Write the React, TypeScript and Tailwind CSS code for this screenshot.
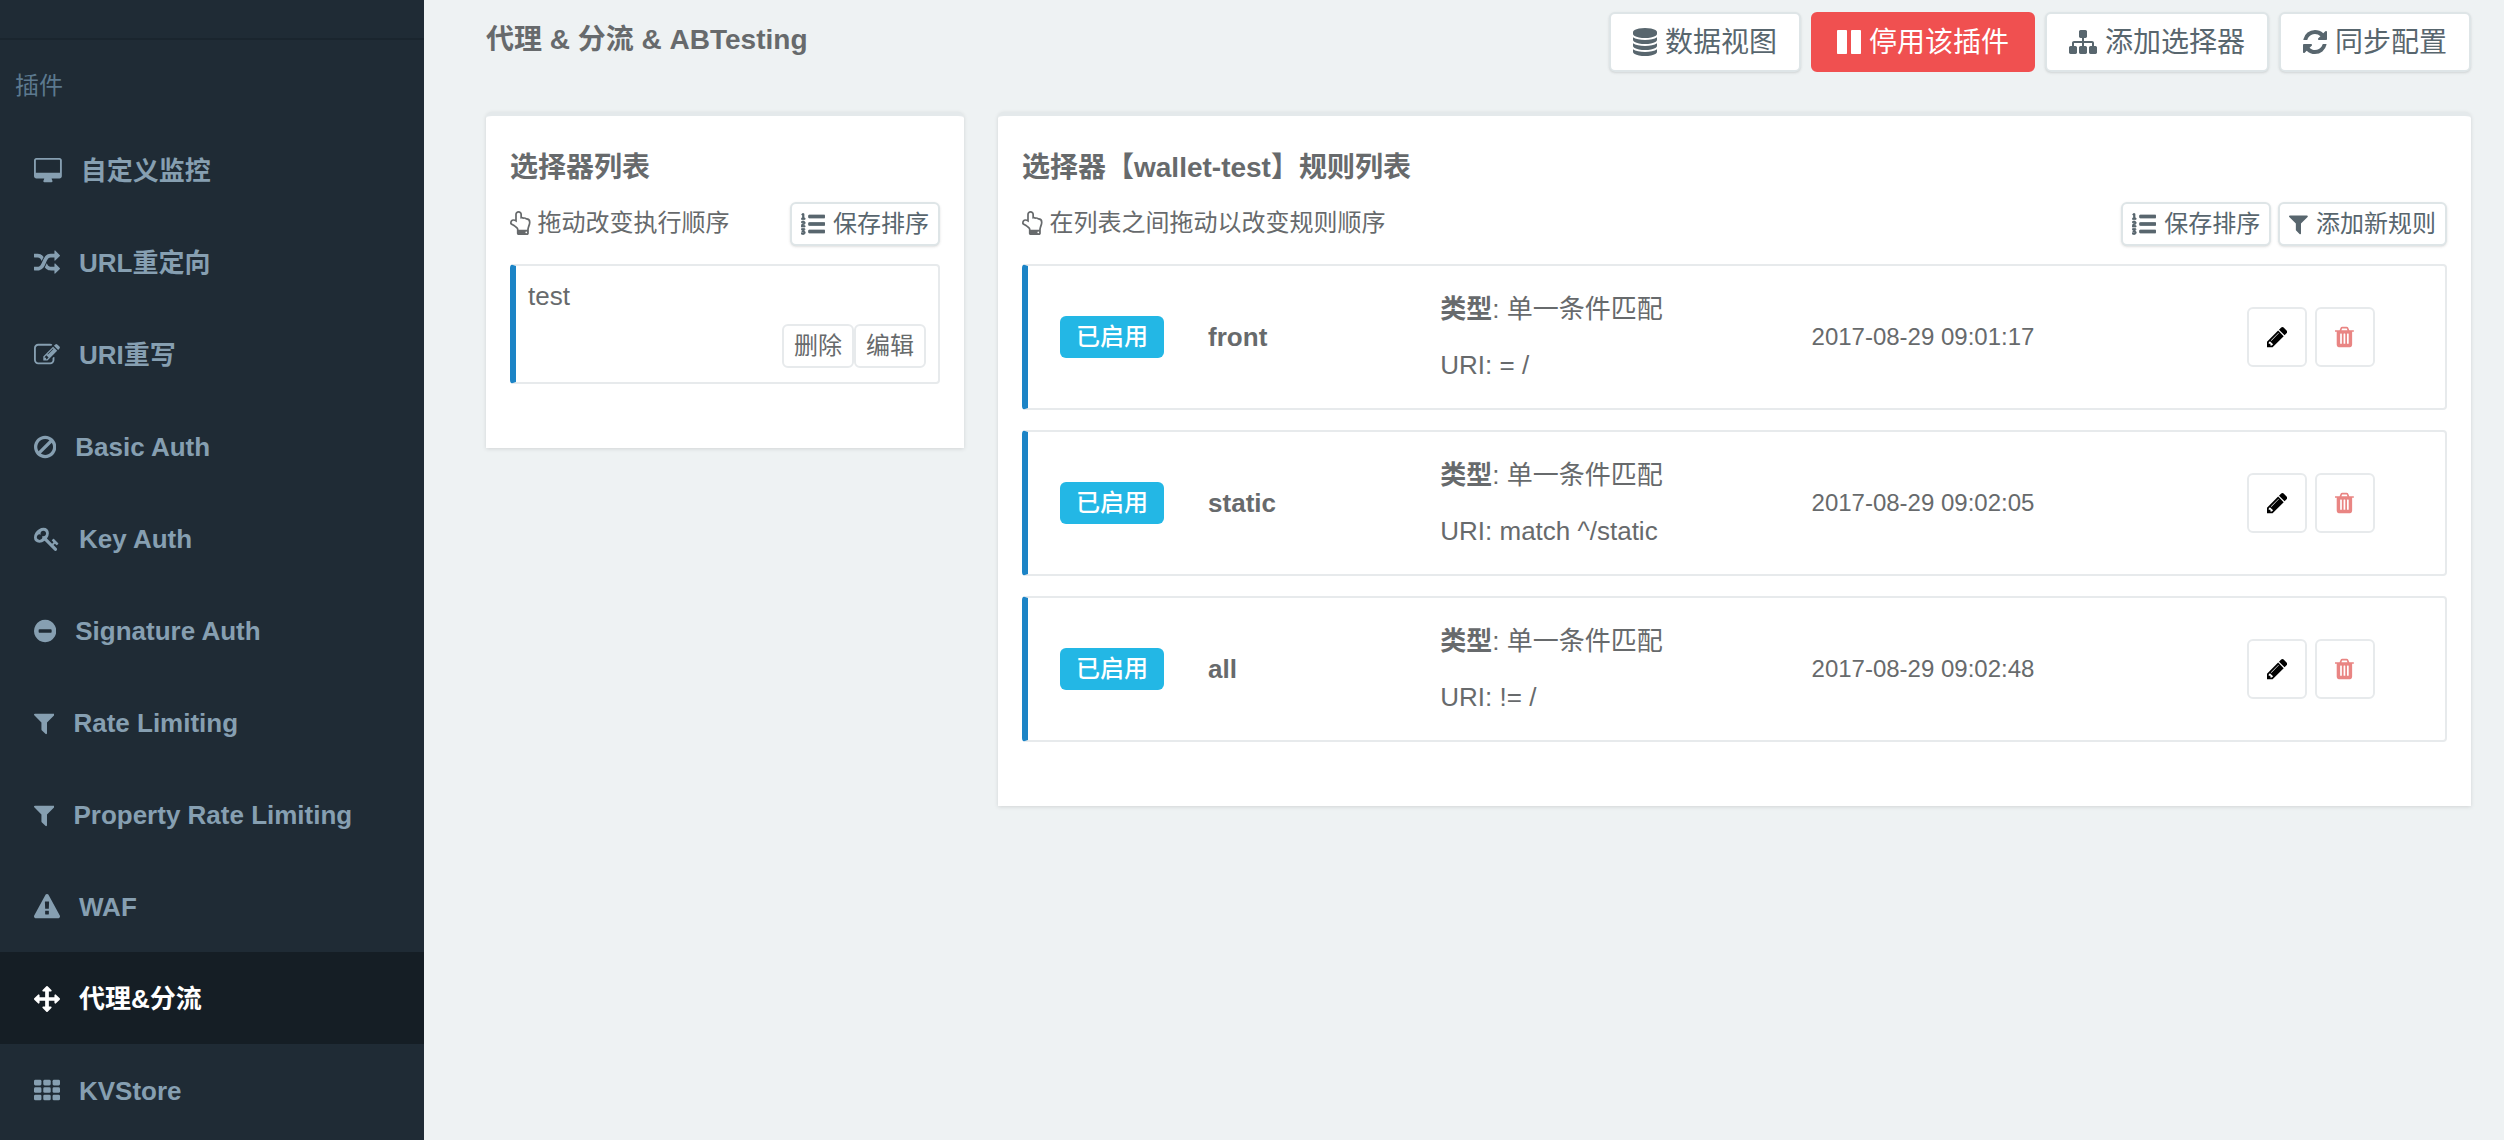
import React from 'react';
import { FaListOl } from 'react-icons/fa';
import clsx from 'clsx';

type IconProps = { className?: string };

const svg = (viewBox: string, d: string) =>
  function Icon({ className }: IconProps) {
    return (
      <svg viewBox={viewBox} fill="currentColor" aria-hidden="true" className={clsx('w-auto shrink-0', className)}>
        <path d={d} />
      </svg>
    );
  };

const Desktop = svg('-64 0 1920 1792', 'M1728 992v-832q0-13-9.5-22.5t-22.5-9.5h-1600q-13 0-22.5 9.5t-9.5 22.5v832q0 13 9.5 22.5t22.5 9.5h1600q13 0 22.5-9.5t9.5-22.5zm128-832v1088q0 66-47 113t-113 47h-544q0 37 16 77.5t32 71 16 43.5q0 26-19 45t-45 19h-512q-26 0-45-19t-19-45q0-14 16-44t32-70 16-78h-544q-66 0-113-47t-47-113v-1088q0-66 47-113t113-47h1600q66 0 113 47t47 113z');
const Random = svg('0 0 1792 1792', 'M666 481q-60 92-137 273-22-45-37-72.5t-40.5-63.5-51-56.5-63-35-81.5-14.5h-224q-14 0-23-9t-9-23v-192q0-14 9-23t23-9h224q250 0 410 225zm1126 799q0 14-9 23l-320 320q-9 9-23 9-13 0-22.5-9.5t-9.5-22.5v-192q-32 0-85 .5t-81 1-73-1-71-5-64-10.5-63-18.5-58-28.5-59-40-55-53.5-56-69.5q59-93 136-273 22 45 37 72.5t40.5 63.5 51 56.5 63 35 81.5 14.5h256v-192q0-14 9-23t23-9q12 0 24 10l319 319q9 9 9 23zm0-896q0 14-9 23l-320 320q-9 9-23 9-13 0-22.5-9.5t-9.5-22.5v-192h-256q-48 0-87 15t-69 45-51 61.5-45 77.5q-32 62-78 171-29 66-49.5 111t-54 105-64 100-74 83-90 68.5-106.5 42-128 16.5h-224q-14 0-23-9t-9-23v-192q0-14 9-23t23-9h224q48 0 87-15t69-45 51-61.5 45-77.5q32-62 78-171 29-66 49.5-111t54-105 64-100 74-83 90-68.5 106.5-42 128-16.5h256v-192q0-14 9-23t23-9q12 0 24 10l319 319q9 9 9 23z');
const Edit = svg('0 0 1792 1792', 'M888 1184l116-116-152-152-116 116v56h96v96h56zm440-720q-16-16-33 1l-350 350q-17 17-1 33t33-1l350-350q17-17 1-33zm80 594v190q0 119-84.5 203.5t-203.5 84.5h-832q-119 0-203.5-84.5t-84.5-203.5v-832q0-119 84.5-203.5t203.5-84.5h832q63 0 117 25 15 7 18 23 3 17-9 29l-49 49q-14 14-32 8-23-6-45-6h-832q-66 0-113 47t-47 113v832q0 66 47 113t113 47h832q66 0 113-47t47-113v-126q0-13 9-22l64-64q15-15 35-7t20 29zm-96-738l288 288-672 672h-288v-288zm444 132l-92 92-288-288 92-92q28-28 68-28t68 28l152 152q28 28 28 68t-28 68z');
const Ban = svg('128 0 1536 1792', 'M1440 893q0-161-87-295l-754 753q137 89 297 89 111 0 211.5-43.5t173.5-116.5 116-174.5 43-212.5zm-999 299l755-754q-135-91-300-91-148 0-273 73t-198 199-73 274q0 162 89 299zm1223-299q0 157-61 300t-163.5 246-245 164-298.5 61-298.5-61-245-164-163.5-246-61-300 61-299.5 163.5-245.5 245-164 298.5-61 298.5 61 245 164 163.5 245.5 61 299.5z');
const Key = svg('0 0 1792 1792', 'M832 512q0-80-56-136t-136-56-136 56-56 136q0 42 19 83-41-19-83-19-80 0-136 56t-56 136 56 136 136 56 136-56 56-136q0-42-19-83 41 19 83 19 80 0 136-56t56-136zm851 704q0 17-49 66t-66 49q-9 0-28.5-16t-36.5-33-38.5-40-24.5-26l-96 96 220 220q28 28 28 68 0 42-39 81t-81 39q-40 0-68-28l-671-671q-176 131-365 131-163 0-265.5-102.5t-102.5-265.5q0-160 95-313t248-248 313-95q163 0 265.5 102.5t102.5 265.5q0 189-131 365l355 355 96-96q-3-3-26-24.5t-40-38.5-33-36.5-16-28.5q0-17 49-66t66-49q13 0 23 10 6 6 46 44.5t82 79.5 86.5 86 73 78 28.5 41z');
const MinusCircle = svg('128 0 1536 1792', 'M1344 960v-128q0-26-19-45t-45-19h-768q-26 0-45 19t-19 45v128q0 26 19 45t45 19h768q26 0 45-19t19-45zm320-64q0 209-103 385.5t-279.5 279.5-385.5 103-385.5-103-279.5-279.5-103-385.5 103-385.5 279.5-279.5 385.5-103 385.5 103 279.5 279.5 103 385.5z');
const Filter = svg('192 0 1408 1792', 'M1595 295q17 41-14 70l-493 493v742q0 42-39 59-13 5-25 5-27 0-45-19l-256-256q-19-19-19-45v-486l-493-493q-31-29-14-70 17-39 59-39h1280q42 0 59 39z');
const Warning = svg('0 0 1792 1792', 'M1024 1375v-190q0-14-9.5-23.5t-22.5-9.5h-192q-13 0-22.5 9.5t-9.5 23.5v190q0 14 9.5 23.5t22.5 9.5h192q13 0 22.5-9.5t9.5-23.5zm-2-374l18-459q0-12-10-19-13-11-24-11h-220q-11 0-24 11-10 7-10 21l17 457q0 10 10 16.5t24 6.5h185q14 0 23.5-6.5t10.5-16.5zm-14-934l768 1408q35 63-2 126-17 29-46.5 46t-63.5 17h-1536q-34 0-63.5-17t-46.5-46q-37-63-2-126l768-1408q17-31 47-49t65-18 65 18 47 49z');
const Arrows = svg('0 0 1792 1792', 'M1792 896q0 26-19 45l-256 256q-19 19-45 19t-45-19-19-45v-128h-384v384h128q26 0 45 19t19 45-19 45l-256 256q-19 19-45 19t-45-19l-256-256q-19-19-19-45t19-45 45-19h128v-384h-384v128q0 26-19 45t-45 19-45-19l-256-256q-19-19-19-45t19-45l256-256q19-19 45-19t45 19 19 45v128h384v-384h-128q-26 0-45-19t-19-45 19-45l256-256q19-19 45-19t45 19l256 256q19 19 19 45t-19 45-45 19h-128v384h384v-128q0-26 19-45t45-19 45 19l256 256q19 19 19 45z');
const Database = svg('128 0 1536 1792', 'M896 768q237 0 443-43t325-127v170q0 69-103 128t-280 93.5-385 34.5-385-34.5-280-93.5-103-128v-170q119 84 325 127t443 43zm0 768q237 0 443-43t325-127v170q0 69-103 128t-280 93.5-385 34.5-385-34.5-280-93.5-103-128v-170q119 84 325 127t443 43zm0-384q237 0 443-43t325-127v170q0 69-103 128t-280 93.5-385 34.5-385-34.5-280-93.5-103-128v-170q119 84 325 127t443 43zm0-1152q208 0 385 34.5t280 93.5 103 128v128q0 69-103 128t-280 93.5-385 34.5-385-34.5-280-93.5-103-128v-128q0-69 103-128t280-93.5 385-34.5z');
const Pause = svg('128 0 1536 1792', 'M1664 192v1408q0 26-19 45t-45 19h-512q-26 0-45-19t-19-45v-1408q0-26 19-45t45-19h512q26 0 45 19t19 45zm-896 0v1408q0 26-19 45t-45 19h-512q-26 0-45-19t-19-45v-1408q0-26 19-45t45-19h512q26 0 45 19t19 45z');
const Sitemap = svg('0 0 1792 1792', 'M1792 1248v320q0 40-28 68t-68 28h-320q-40 0-68-28t-28-68v-320q0-40 28-68t68-28h96v-192h-512v192h96q40 0 68 28t28 68v320q0 40-28 68t-68 28h-320q-40 0-68-28t-28-68v-320q0-40 28-68t68-28h96v-192h-512v192h96q40 0 68 28t28 68v320q0 40-28 68t-68 28h-320q-40 0-68-28t-28-68v-320q0-40 28-68t68-28h96v-192q0-52 38-90t90-38h512v-192h-96q-40 0-68-28t-28-68v-320q0-40 28-68t68-28h320q40 0 68 28t28 68v320q0 40-28 68t-68 28h-96v192h512q52 0 90 38t38 90v192h96q40 0 68 28t28 68z');
const Refresh = svg('128 0 1536 1792', 'M1639 1056q0 5-1 7-64 268-268 434.5t-478 166.5q-146 0-282.5-55t-243.5-157l-129 129q-19 19-45 19t-45-19-19-45v-448q0-26 19-45t45-19h448q26 0 45 19t19 45-19 45l-137 137q71 66 161 102t187 36q134 0 250-65t186-179q11-17 53-117 8-23 30-23h192q13 0 22.5 9.5t9.5 22.5zm25-800v448q0 26-19 45t-45 19h-448q-26 0-45-19t-19-45 19-45l138-138q-148-137-349-137-134 0-250 65t-186 179q-11 17-53 117-8 23-30 23h-199q-13 0-22.5-9.5t-9.5-22.5v-7q65-268 270-434.5t480-166.5q146 0 284 55.5t245 156.5l130-129q19-19 45-19t45 19 19 45z');
const HandUp = svg('128 0 1536 1792', 'M1408 1600q0-26-19-45t-45-19-45 19-19 45 19 45 45 19 45-19 19-45zm128-764q0-189-167-189-26 0-56 5-16-30-52.5-47.5t-73.5-17.5-69 18q-50-53-119-53-25 0-55.5 10t-47.5 25v-331q0-52-38-90t-90-38q-51 0-89.5 39t-38.5 89v576q-20 0-48.5-15t-55-33-68-33-84.5-15q-67 0-97.5 44.5t-30.5 115.5q0 24 139 90 44 24 65 37 64 40 145 112 81 71 106 101 57 69 57 140v32h640v-32q0-72 32-167t64-193.5 32-179.5zm128-5q0 133-69 322-59 164-59 223v288q0 53-37.5 90.5t-90.5 37.5h-640q-53 0-90.5-37.5t-37.5-90.5v-288q0-10-4.5-21.5t-14-23.5-18-22.5-22.5-24-21.5-20.5-21.5-19-17-14q-74-65-129-100-21-13-62-33t-72-37-63-40.5-49.5-55-17.5-69.5q0-125 67-206.5t189-81.5q68 0 128 22v-374q0-104 77-180t179-76q105 0 181 75.5t76 180.5v169q62 4 119 37 21-3 43-3 101 0 178 60 139-1 219.5 85t80.5 227z');
const Pencil = svg('128 0 1536 1792', 'M491 1536l91-91-235-235-91 91v107h128v128h107zm523-928q0-22-22-22-10 0-17 7l-542 542q-7 7-7 17 0 22 22 22 10 0 17-7l542-542q7-7 7-17zm-54-192l416 416-832 832h-416v-416zm683 96q0 53-37 90l-166 166-416-416 166-165q36-38 90-38 53 0 91 38l235 234q37 39 37 91z');
const Trash = svg('192 0 1408 1792', 'M704 1376v-704q0-14-9-23t-23-9h-64q-14 0-23 9t-9 23v704q0 14 9 23t23 9h64q14 0 23-9t9-23zm256 0v-704q0-14-9-23t-23-9h-64q-14 0-23 9t-9 23v704q0 14 9 23t23 9h64q14 0 23-9t9-23zm256 0v-704q0-14-9-23t-23-9h-64q-14 0-23 9t-9 23v704q0 14 9 23t23 9h64q14 0 23-9t9-23zm-544-992h448l-48-117q-7-9-17-11h-317q-10 2-17 11zm928 32v64q0 14-9 23t-23 9h-96v948q0 83-47 143.5t-113 60.5h-832q-66 0-113-58.5t-47-141.5v-952h-96q-14 0-23-9t-9-23v-64q0-14 9-23t23-9h309l70-167q15-37 54-63t79-26h320q40 0 79 26t54 63l70 167h309q14 0 23 9t9 23z');

function Grid({ className }: IconProps) {
  return (
    <svg viewBox="0 0 1792 1792" fill="currentColor" aria-hidden="true" className={clsx('w-auto shrink-0', className)}>
      {[128, 640, 1152].map((y) =>
        [0, 640, 1280].map((x) => <rect key={`${x}-${y}`} x={x} y={y} width="512" height="384" rx="96" />)
      )}
    </svg>
  );
}

function NumberedList({ className }: IconProps) {
  return <FaListOl aria-hidden="true" className={clsx('shrink-0 stroke-16', className)} />;
}

const menu = [
  { label: '自定义监控', icon: Desktop },
  { label: 'URL重定向', icon: Random },
  { label: 'URI重写', icon: Edit },
  { label: 'Basic Auth', icon: Ban },
  { label: 'Key Auth', icon: Key },
  { label: 'Signature Auth', icon: MinusCircle },
  { label: 'Rate Limiting', icon: Filter },
  { label: 'Property Rate Limiting', icon: Filter },
  { label: 'WAF', icon: Warning },
  { label: '代理&分流', icon: Arrows, active: true },
  { label: 'KVStore', icon: Grid }
];

const actions = [
  { label: '数据视图', icon: Database },
  { label: '停用该插件', icon: Pause, danger: true },
  { label: '添加选择器', icon: Sitemap },
  { label: '同步配置', icon: Refresh }
];

const rules = [
  { name: 'front', uri: '= /', time: '2017-08-29 09:01:17' },
  { name: 'static', uri: 'match ^/static', time: '2017-08-29 09:02:05' },
  { name: 'all', uri: '!= /', time: '2017-08-29 09:02:48' }
];

function Sidebar() {
  return (
    <aside className="w-[424px] shrink-0 bg-[#1f2b35] pt-[38px]">
      <div className="flex h-[86px] items-center border-t-2 border-[#1a252e] pl-[15px] pt-2 text-2xl text-[#5c798f]">
        插件
      </div>
      <nav>
        {menu.map(({ label, icon: Icon, active }) => (
          <a
            key={label}
            href="#"
            className={clsx(
              'flex h-[92px] items-center gap-[19px] pt-0.5 pl-[34px] font-semibold',
              active ? 'bg-[#151e25] text-white' : 'text-[#869fb1]'
            )}
          >
            <Icon className="h-[26px]" />
            {label}
          </a>
        ))}
      </nav>
    </aside>
  );
}

function SmallButton({ icon: Icon, children }: { icon: React.ElementType; children: React.ReactNode }) {
  return (
    <button className="flex h-11 items-center gap-2 rounded-md border-2 border-[#dee5e7] bg-white px-[9px] text-2xl text-[#58666e] shadow-sm">
      <Icon className="h-6 w-auto" />
      {children}
    </button>
  );
}

function Card({ title, hint, buttons, children }: { title: string; hint: string; buttons: React.ReactNode; children: React.ReactNode }) {
  return (
    <section className="rounded-t-md border-t-4 border-[#e4e9eb] bg-white px-6 pt-[34px] pb-16 shadow-[0_1px_4px_rgba(0,0,0,0.12)]">
      <h2 className="text-[28px] leading-9 font-semibold">{title}</h2>
      <div className="mt-4 mb-[18px] flex items-center justify-between">
        <p className="flex items-center gap-[7px] pb-0.5 text-2xl">
          <HandUp className="h-6" />
          {hint}
        </p>
        <div className="flex gap-[7px]">{buttons}</div>
      </div>
      {children}
    </section>
  );
}

export default function App() {
  return (
    <div className="flex min-h-screen bg-[#eef2f3] font-['Liberation_Sans','Noto_Sans_CJK_SC',sans-serif] text-[26px] leading-9 text-[#676a6c]">
      <Sidebar />

      <main className="min-w-0 flex-1 pt-3 pr-[33px] pl-[62px]">
        <header className="flex items-start justify-between">
          <h1 className="pt-2.5 text-[28px] leading-9 font-semibold">代理 &amp; 分流 &amp; ABTesting</h1>
          <div className="flex gap-2.5">
            {actions.map(({ label, icon: Icon, danger }) => (
              <button
                key={label}
                className={clsx(
                  'flex h-[60px] items-center gap-2 rounded-md border-2 text-[28px]',
                  danger ? 'border-[#f05050] bg-[#f05050] px-6 text-white' : 'border-[#dee5e7] bg-white px-[22px] text-[#58666e] shadow-sm'
                )}
              >
                <Icon className="h-7" />
                <span className="pt-0.5">{label}</span>
              </button>
            ))}
          </div>
        </header>

        <div className="mt-10 grid grid-cols-[478fr_1473fr] items-start gap-[34px]">
          {/* selectors */}
          <Card title="选择器列表" hint="拖动改变执行顺序" buttons={<SmallButton icon={NumberedList}>保存排序</SmallButton>}>
            <div className="rounded-sm border-2 border-l-6 border-[#e7eaec] border-l-[#1c84c6] px-3 pt-3 pb-[14px]">
              <p>test</p>
              <div className="mt-[10px] flex justify-end text-2xl">
                <button className="h-11 rounded-md border-2 border-[#e7eaec] px-[10px]">删除</button>
                <button className="h-11 rounded-md border-2 border-[#e7eaec] px-[10px]">编辑</button>
              </div>
            </div>
          </Card>

          {/* rules of the current selector */}
          <Card
            title="选择器【wallet-test】规则列表"
            hint="在列表之间拖动以改变规则顺序"
            buttons={
              <>
                <SmallButton icon={NumberedList}>保存排序</SmallButton>
                <SmallButton icon={Filter}>添加新规则</SmallButton>
              </>
            }
          >
            <ul className="flex flex-col gap-5">
              {rules.map((rule) => (
                <li
                  key={rule.name}
                  className="grid grid-cols-[148fr_232fr_371fr_435fr_198fr] items-center rounded-sm border-2 border-l-6 border-[#e7eaec] border-l-[#1c84c6] py-[25px] pl-8"
                >
                  <span className="flex h-[42px] items-center justify-self-start rounded-md bg-[#23b7e5] px-4 text-2xl font-medium text-white">
                    已启用
                  </span>
                  <b className="font-semibold">{rule.name}</b>
                  <div className="flex flex-col gap-5">
                    <p><b>类型</b>: 单一条件匹配</p>
                    <p>URI: {rule.uri}</p>
                  </div>
                  <time className="text-2xl">{rule.time}</time>
                  <div className="flex gap-2">
                    <button aria-label="编辑" className="flex size-[60px] items-center justify-center rounded-md border-2 border-[#e7eaec] text-black">
                      <Pencil className="h-6" />
                    </button>
                    <button aria-label="删除" className="flex size-[60px] items-center justify-center rounded-md border-2 border-[#e7eaec] text-[#e98583]">
                      <Trash className="h-6" />
                    </button>
                  </div>
                </li>
              ))}
            </ul>
          </Card>
        </div>
      </main>
    </div>
  );
}
